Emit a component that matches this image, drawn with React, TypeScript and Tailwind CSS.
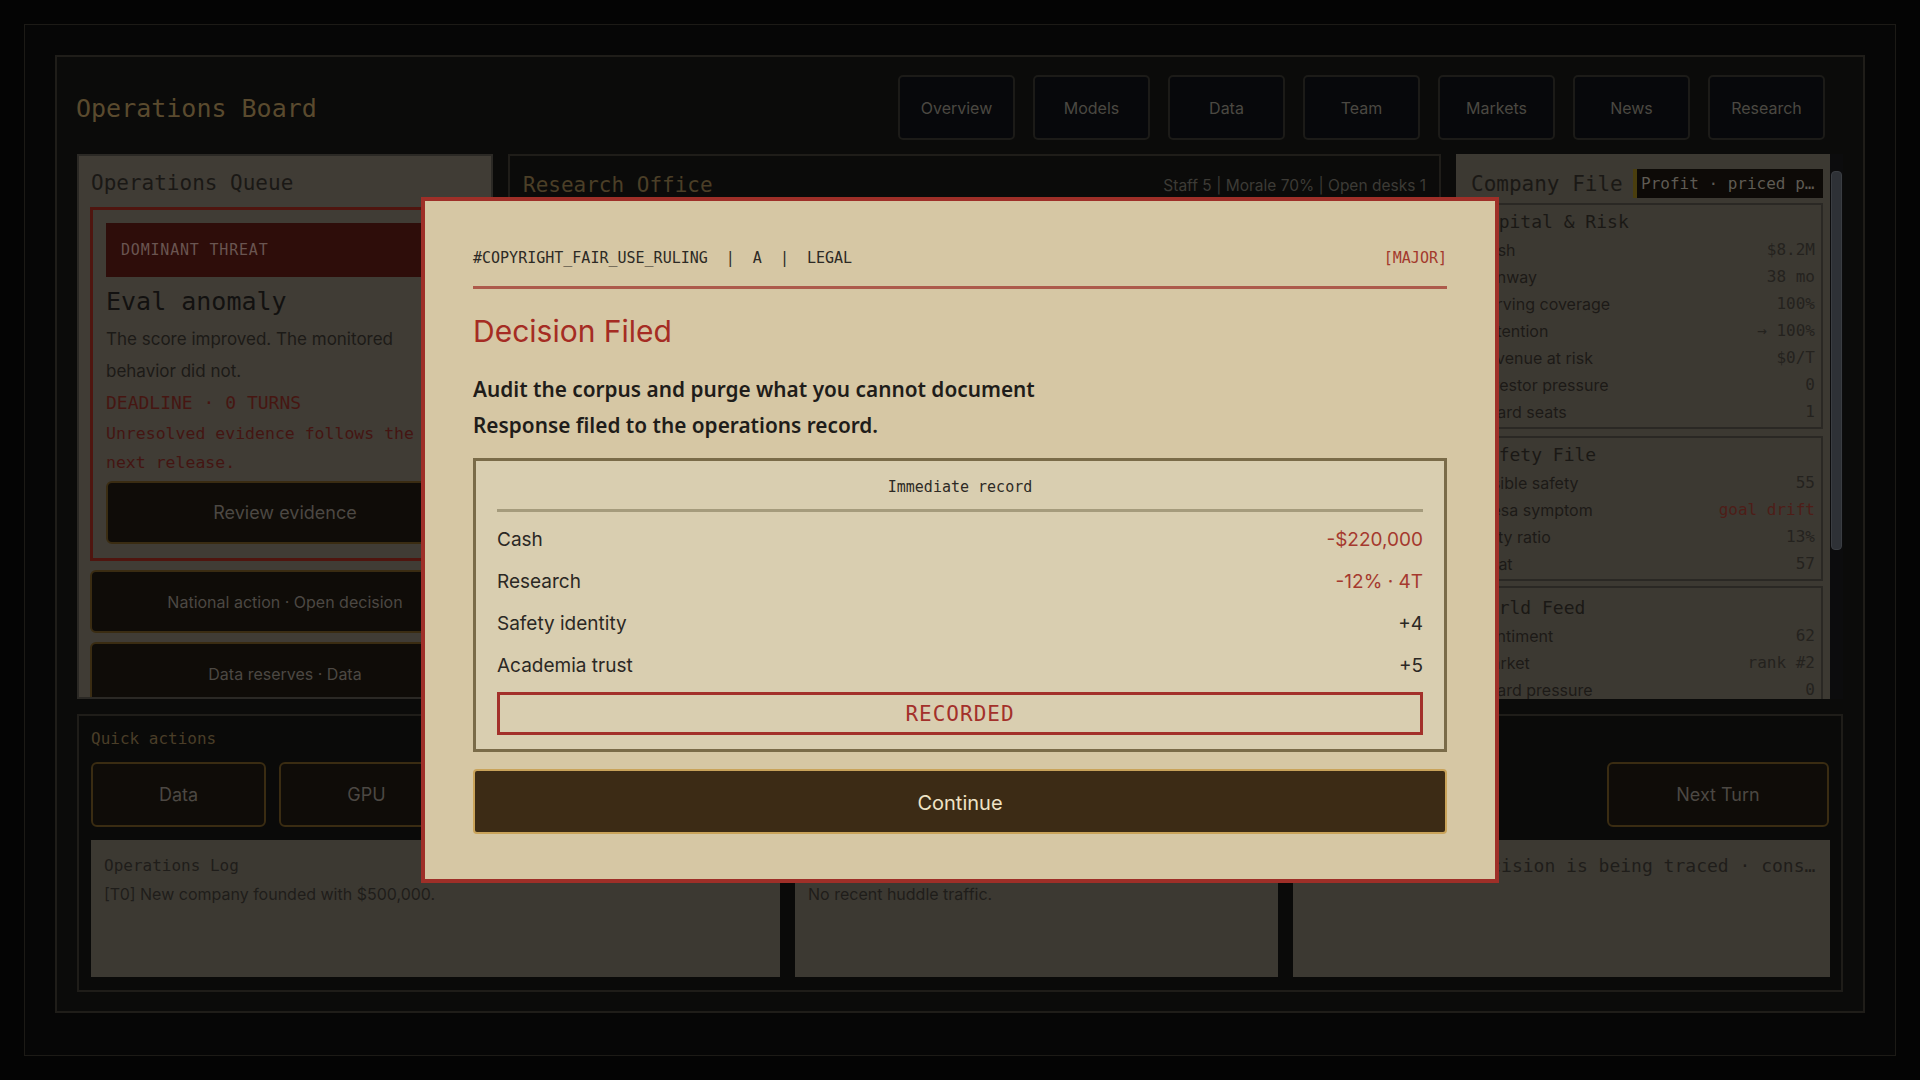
import React from "react";

const MONO = "font-['DejaVu_Sans_Mono','Liberation_Mono',monospace]";
const SANS = "font-['Inter','Liberation_Sans',sans-serif]";
const NOTO = "font-['Noto_Sans','Open_Sans',sans-serif]";

type RowT = [string, string, boolean?];

function FileCard({ title, rows, extra }: { title: string; rows: RowT[]; extra?: string }) {
  return (
    <div className={`border-2 border-[#2a2824] pl-[8px] pr-[6px] pt-[6px] pb-[2px] ${extra ?? ""}`}>
      <div className={`${MONO} mb-[3px] whitespace-nowrap text-[18px] leading-[22px] text-[#1a1815]`}>{title}</div>
      {rows.map((r) => (
        <div key={r[0]} className="flex h-[27px] items-center justify-between whitespace-nowrap">
          <span className={`${SANS} text-[16px] text-[#1c1a17]`}>{r[0]}</span>
          <span className={`${MONO} text-[16px] ${r[2] ? "text-[#4e1d18]" : "text-[#24221e]"}`}>{r[1]}</span>
        </div>
      ))}
    </div>
  );
}

function DarkButton({ label, extra }: { label: string; extra?: string }) {
  return (
    <div
      className={`${SANS} flex items-center justify-center rounded-[6px] border-2 border-[#3a2c12] bg-[#0f0c08] text-[#4c4843] ${extra ?? ""}`}
    >
      {label}
    </div>
  );
}

const tabs = ["Overview", "Models", "Data", "Team", "Markets", "News", "Research"];

export default function App() {
  return (
    <div className="relative h-[1080px] w-[1920px] overflow-hidden bg-[#040404] p-6">
      <div className="h-full border border-[#1c1a16] bg-[#060606] px-[30px] pt-[30px]">
        <div className="h-[958px] border-2 border-[#1f1d19] bg-[#0b0b0a] px-[20px] pt-[18px]">
          {/* header */}
          <div className="flex h-[65px] items-center justify-between pr-[18px]">
            <div className={`${MONO} -ml-[1px] pt-[2px] text-[25px] text-[#5a4a2e]`}>Operations Board</div>
            <div className="flex gap-[18px]">
              {tabs.map((t) => (
                <div
                  key={t}
                  className={`${SANS} flex h-[65px] w-[117px] items-center justify-center rounded-[5px] border-2 border-[#1c1b18] bg-[#07080b] text-[16px] text-[#4b4842]`}
                >
                  {t}
                </div>
              ))}
            </div>
          </div>

          {/* top panels */}
          <div className="mt-[14px] grid h-[545px] grid-cols-[416px_933px_1fr] gap-[15px]">
            {/* Operations Queue */}
            <div className="overflow-hidden border-2 border-[#2b2925] bg-[#403c35] px-[11px] pt-[14px]">
              <div className={`${MONO} ml-[1px] h-[26px] text-[21px] leading-[26px] text-[#1a1815]`}>Operations Queue</div>
              <div className="mt-[11px] border-[3px] border-[#4f150f] px-[13px] pt-[13px] pb-[14px]">
                <div className={`${MONO} flex h-[54px] items-center bg-[#2e0d0a] px-[15px] text-[15px] tracking-[0.8px] text-[#6a5551]`}>
                  DOMINANT THREAT
                </div>
                <div className={`${MONO} mt-[10px] text-[25px] leading-[30px] text-[#121110]`}>Eval anomaly</div>
                <div className={`${SANS} mt-[6px] text-[17px] leading-[32px] text-[#1c1a17]`}>
                  The score improved. The monitored behavior did not.
                </div>
                <div className={`${MONO} mt-[4px] text-[18px] leading-[24px] text-[#461612]`}>DEADLINE · 0 TURNS</div>
                <div className={`${MONO} mt-[4px] pr-[12px] text-[16.5px] leading-[29px] text-[#441512]`}>
                  Unresolved evidence follows the next release.
                </div>
                <DarkButton label="Review evidence" extra="mt-[4px] h-[63px] text-[18px]" />
              </div>
              <DarkButton label="National action · Open decision" extra="mt-[9px] h-[63px] text-[16px]" />
              <DarkButton label="Data reserves · Data" extra="mt-[9px] h-[63px] text-[16px]" />
            </div>

            {/* Research Office */}
            <div className="overflow-hidden border-2 border-[#1f1d19] bg-[#0b0b0a] px-[13px] pt-[16px]">
              <div className="flex h-[28px] items-center justify-between">
                <div className={`${MONO} text-[21px] text-[#4b3f27]`}>Research Office</div>
                <div className={`${SANS} text-[15.5px] text-[#3d3b36]`}>Staff 5 | Morale 70% | Open desks 1</div>
              </div>
              <div className="mt-[14px] grid grid-cols-3 gap-[12px]">
                {["Desk A", "Desk B", "Desk C"].map((d) => (
                  <div key={d} className="h-[120px] rounded-[6px] border-2 border-[#1f1d19]" />
                ))}
              </div>
            </div>

            {/* Company File */}
            <div className="flex overflow-hidden">
              <div className="flex-1 overflow-hidden bg-[#3c3932] pl-[11px] pr-[7px] pt-[15px]">
                <div className="flex h-[29px] items-center justify-between">
                  <div className={`${MONO} pl-[4px] pt-[2px] text-[21px] text-[#1a1815]`}>Company File</div>
                  <div
                    className={`${MONO} flex h-[29px] w-[190px] items-center overflow-hidden border-l-4 border-[#4a3e0e] bg-[#0d0a07] pl-[4px] pr-[4px] text-[16px] whitespace-nowrap text-[#5f5b53]`}
                  >
                    <span className="truncate">Profit · priced per token</span>
                  </div>
                </div>
                <div className="mt-[5px]">
                  <FileCard
                    title="Capital & Risk"
                    rows={[
                      ["Cash", "$8.2M"],
                      ["Runway", "38 mo"],
                      ["Serving coverage", "100%"],
                      ["Retention", "→ 100%"],
                      ["Revenue at risk", "$0/T"],
                      ["Investor pressure", "0"],
                      ["Board seats", "1"],
                    ]}
                  />
                  <FileCard
                    extra="mt-[7px]"
                    title="Safety File"
                    rows={[
                      ["Visible safety", "55"],
                      ["Mesa symptom", "goal drift", true],
                      ["Duty ratio", "13%"],
                      ["Heat", "57"],
                    ]}
                  />
                  <FileCard
                    extra="mt-[5px] pt-[9px]"
                    title="World Feed"
                    rows={[
                      ["Sentiment", "62"],
                      ["Market", "rank #2"],
                      ["Board pressure", "0"],
                    ]}
                  />
                </div>
              </div>
              <div className="w-[13px] bg-[#0c0c0d] pt-[17px]">
                <div className="mx-[1px] h-[379px] rounded-[4px] border border-[#3a3d42] bg-[#2e3136]" />
              </div>
            </div>
          </div>

          {/* Quick actions */}
          <div className="mt-[15px] h-[278px] border-2 border-[#1f1d19] bg-[#0a0a09] px-[12px] pt-[12px]">
            <div className={`${MONO} h-[22px] text-[16px] leading-[22px] text-[#4a3e28]`}>Quick actions</div>
            <div className="mt-[12px] flex h-[65px] justify-between">
              <div className="flex gap-[13px]">
                {["Data", "GPU"].map((b) => (
                  <DarkButton key={b} label={b} extra="h-[65px] w-[175px] text-[18px]" />
                ))}
                <div className="h-[65px] w-[175px] rounded-[6px] border-2 border-[#3a2c12] bg-[#0f0c08]" />
                <div className="h-[65px] w-[175px] rounded-[6px] border-2 border-[#3a2c12] bg-[#0f0c08]" />
              </div>
              <DarkButton label="Next Turn" extra="h-[65px] w-[222px] text-[18px]" />
            </div>
            <div className="mt-[13px] grid h-[137px] grid-cols-[689px_483px_537px] gap-[15px]">
              <div className="bg-[#3c3932] px-[13px] pt-[14px]">
                <div className={`${MONO} text-[16px] leading-[24px] text-[#1f1d1a]`}>Operations Log</div>
                <div className={`${SANS} mt-[4px] text-[16px] leading-[24px] text-[#1f1d1a]`}>[T0] New company founded with $500,000.</div>
              </div>
              <div className="bg-[#3c3932] px-[13px] pt-[14px]">
                <div className="h-[24px]" />
                <div className={`${SANS} mt-[4px] text-[16px] leading-[24px] text-[#1f1d1a]`}>No recent huddle traffic.</div>
              </div>
              <div className="overflow-hidden bg-[#3c3932] px-[13px] pt-[14px]">
                <div className={`${MONO} truncate text-[18px] leading-[24px] text-[#1f1d1a]`}>
                  Archive: every decision is being traced · consequences follow the release
                </div>
              </div>
            </div>
          </div>
        </div>
      </div>

      {/* Modal */}
      <div className="fixed inset-0 flex items-center justify-center">
        <div className="w-[1078px] border-4 border-[#9e2f28] bg-[#d6c7a4] px-12 pt-12 pb-[45px]">
          <div className="flex items-center justify-between border-b-[3px] border-[#ad5a4b] pb-[19px]">
            <div className={`${MONO} flex gap-[18px] text-[15px] leading-[18px] text-[#2d2a25]`}>
              <span>#COPYRIGHT_FAIR_USE_RULING</span>
              <span>|</span>
              <span>A</span>
              <span>|</span>
              <span>LEGAL</span>
            </div>
            <div className={`${MONO} text-[15px] leading-[18px] text-[#a3392d]`}>[MAJOR]</div>
          </div>
          <div className={`${SANS} mt-[24px] text-[30px] leading-[36px] text-[#a52c23]`}>Decision Filed</div>
          <div className={`${NOTO} mt-[22px] text-[20.8px] leading-[36px] font-semibold text-[#1f1d1a]`}>
            <p>Audit the corpus and purge what you cannot document</p>
            <p>Response filed to the operations record.</p>
          </div>
          <div className="mt-[15px] border-[3px] border-[#7a6b48] bg-[#d9ceb0] px-[21px] pt-[16px] pb-[14px]">
            <div className={`${MONO} text-center text-[15px] leading-[20px] text-[#2d2a25]`}>Immediate record</div>
            <div className="mt-[12px] h-[3px] bg-[#a59b7c]" />
            <div className="mt-[7px]">
              {[
                ["Cash", "-$220,000", true],
                ["Research", "-12% · 4T", true],
                ["Safety identity", "+4", false],
                ["Academia trust", "+5", false],
              ].map(([l, v, red]) => (
                <div key={l as string} className={`${SANS} flex h-[42px] items-center justify-between text-[19px]`}>
                  <span className="text-[#2b2824]">{l}</span>
                  <span className={red ? "text-[#a5392e]" : "text-[#2b2824]"}>{v}</span>
                </div>
              ))}
            </div>
            <div
              className={`${MONO} mt-[5px] flex h-[43px] items-center justify-center border-[3px] border-[#a3302a] pt-[3px] text-[21px] tracking-[1px] text-[#a3302a]`}
            >
              RECORDED
            </div>
          </div>
          <div
            className={`${SANS} mt-[17px] flex h-[65px] items-center justify-center rounded-[4px] border-2 border-[#c9a35a] bg-[#3c2b15] pt-[2px] text-[20px] text-[#efe3c6]`}
          >
            Continue
          </div>
        </div>
      </div>
    </div>
  );
}
